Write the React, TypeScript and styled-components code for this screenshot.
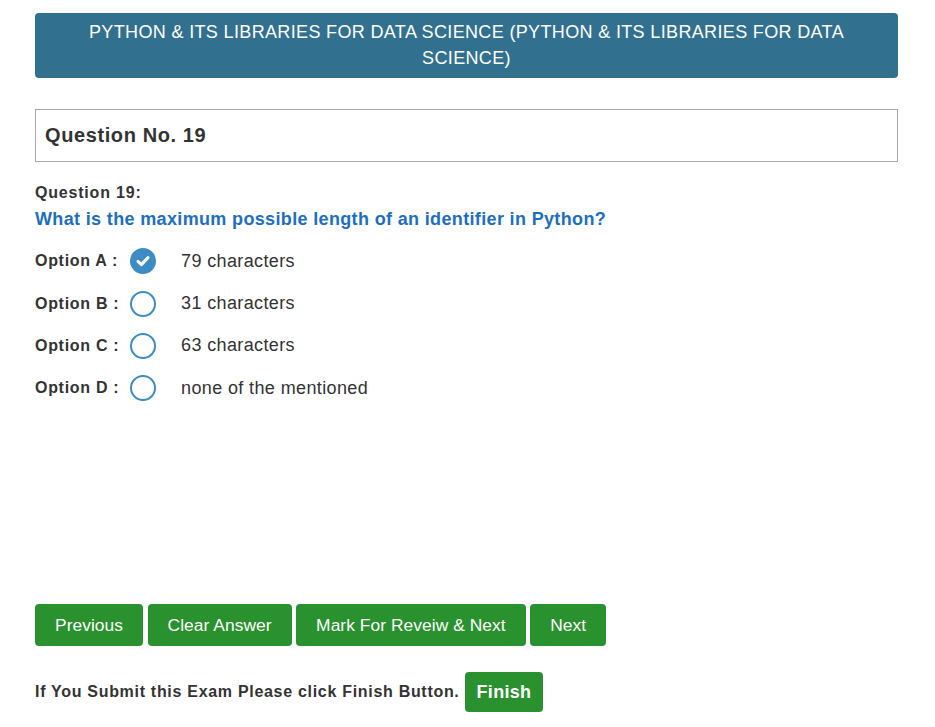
import React from "react";
import styled, { createGlobalStyle } from "styled-components";

const GlobalStyle = createGlobalStyle`
  html, body { margin: 0; padding: 0; background: #ffffff; }
  body { font-family: "Liberation Sans", Arial, sans-serif; color: #333333; }
  * { box-sizing: border-box; }
`;

const Page = styled.div`
  width: 863px;
  margin: 13px 0 0 35px;
  display: flex;
  flex-direction: column;
`;

const Header = styled.div`
  background: #32708f;
  color: #ffffff;
  border-radius: 4px;
  padding: 6px 15px 7px;
  font-size: 18px;
  letter-spacing: 0.35px;
  line-height: 26px;
  text-align: center;
`;

const QuestionBox = styled.div`
  margin-top: 31px;
  height: 53px;
  border: 1px solid #a9a9a9;
  padding: 0 9px;
  display: flex;
  align-items: center;
  font-size: 20px;
  letter-spacing: 0.6px;
  font-weight: bold;
  color: #333333;
`;

const QLabel = styled.div`
  margin-top: 20px;
  font-size: 16px;
  letter-spacing: 0.8px;
  font-weight: bold;
  line-height: 22px;
`;

const QText = styled.div`
  margin-top: 2px;
  font-size: 18px;
  letter-spacing: 0.35px;
  font-weight: bold;
  line-height: 26px;
  color: #1e6fbf;
`;

const Options = styled.div`
  margin-top: 8px;
  display: flex;
  flex-direction: column;
`;

const OptionRow = styled.div`
  height: 42.4px;
  display: flex;
  align-items: center;
`;

const OptionLabel = styled.span`
  width: 95px;
  font-size: 16px;
  letter-spacing: 0.7px;
  font-weight: bold;
`;

const Radio = styled.span<{ $checked?: boolean }>`
  width: 26px;
  height: 26px;
  border-radius: 50%;
  border: 2px solid #3d8cc3;
  background: ${(p) => (p.$checked ? "#3d8cc3" : "#ffffff")};
  display: inline-flex;
  align-items: center;
  justify-content: center;
  flex: none;
`;

const OptionText = styled.span`
  margin-left: 25px;
  font-size: 18px;
  letter-spacing: 0.38px;
  color: #333333;
`;

const ButtonBar = styled.div`
  margin-top: 194px;
  display: flex;
  gap: 4.5px;
`;

const GreenButton = styled.button<{ $bold?: boolean }>`
  background: #29912d;
  color: #ffffff;
  border: none;
  border-radius: 4px;
  font-family: "Liberation Sans", Arial, sans-serif;
  font-size: 17.4px;
  letter-spacing: 0.05px;
  font-weight: ${(p) => (p.$bold ? "bold" : "normal")};
  line-height: 26px;
  padding: 8px 20px;
  cursor: pointer;
`;

const FinishRow = styled.div`
  margin-top: 26px;
  display: flex;
  align-items: center;
  gap: 5px;
  font-size: 16px;
  letter-spacing: 0.7px;
  font-weight: bold;
`;

const FinishButton = styled(GreenButton)`
  padding: 7px 12px;
  font-size: 18px;
  letter-spacing: 0.3px;
`;

const Check = () => (
  <svg width="16" height="16" viewBox="0 0 16 16">
    <path d="M3 8.4 L6.4 11.6 L13 4.6" fill="none" stroke="#ffffff" strokeWidth="3" strokeLinecap="round" strokeLinejoin="round" />
  </svg>
);

const options = [
  { key: "A", text: "79 characters", checked: true },
  { key: "B", text: "31 characters" },
  { key: "C", text: "63 characters" },
  { key: "D", text: "none of the mentioned" },
];

export default function App() {
  return (
    <>
      <GlobalStyle />
      <Page>
        <Header>
          PYTHON &amp; ITS LIBRARIES FOR DATA SCIENCE (PYTHON &amp; ITS LIBRARIES FOR DATA SCIENCE)
        </Header>
        <QuestionBox>Question No. 19</QuestionBox>
        <QLabel>Question 19:</QLabel>
        <QText>What is the maximum possible length of an identifier in Python?</QText>
        <Options>
          {options.map((o) => (
            <OptionRow key={o.key}>
              <OptionLabel>Option {o.key} :</OptionLabel>
              <Radio $checked={o.checked}>{o.checked && <Check />}</Radio>
              <OptionText>{o.text}</OptionText>
            </OptionRow>
          ))}
        </Options>
        <ButtonBar>
          <GreenButton>Previous</GreenButton>
          <GreenButton>Clear Answer</GreenButton>
          <GreenButton>Mark For Reveiw &amp; Next</GreenButton>
          <GreenButton>Next</GreenButton>
        </ButtonBar>
        <FinishRow>
          If You Submit this Exam Please click Finish Button.
          <FinishButton $bold>Finish</FinishButton>
        </FinishRow>
      </Page>
    </>
  );
}
